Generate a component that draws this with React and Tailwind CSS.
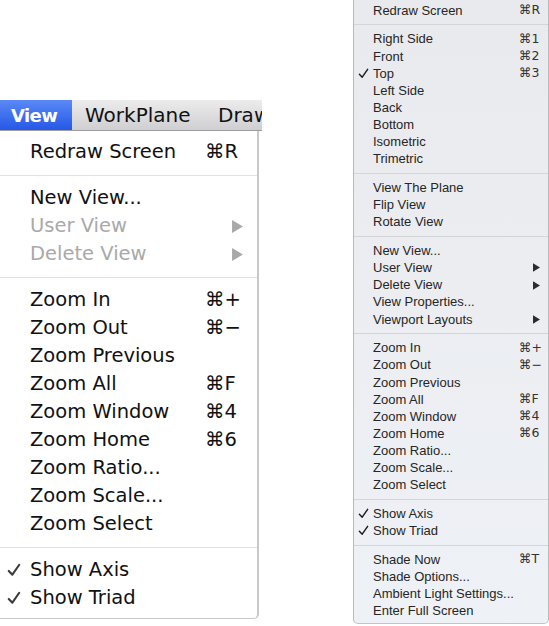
import React from "react";

const SEP = { sep: true };

const classicItems = [
  { label: "Redraw Screen", keys: "⌘R" },
  SEP,
  { label: "New View..." },
  { label: "User View", disabled: true, sub: true },
  { label: "Delete View", disabled: true, sub: true },
  SEP,
  { label: "Zoom In", keys: "⌘+" },
  { label: "Zoom Out", keys: "⌘−" },
  { label: "Zoom Previous" },
  { label: "Zoom All", keys: "⌘F" },
  { label: "Zoom Window", keys: "⌘4" },
  { label: "Zoom Home", keys: "⌘6" },
  { label: "Zoom Ratio..." },
  { label: "Zoom Scale..." },
  { label: "Zoom Select" },
  SEP,
  { label: "Show Axis", checked: true },
  { label: "Show Triad", checked: true },
];

const modernItems = [
  { label: "Redraw Screen", keys: "⌘R" },
  SEP,
  { label: "Right Side", keys: "⌘1" },
  { label: "Front", keys: "⌘2" },
  { label: "Top", keys: "⌘3", checked: true },
  { label: "Left Side" },
  { label: "Back" },
  { label: "Bottom" },
  { label: "Isometric" },
  { label: "Trimetric" },
  SEP,
  { label: "View The Plane" },
  { label: "Flip View" },
  { label: "Rotate View" },
  SEP,
  { label: "New View..." },
  { label: "User View", sub: true },
  { label: "Delete View", sub: true },
  { label: "View Properties..." },
  { label: "Viewport Layouts", sub: true },
  SEP,
  { label: "Zoom In", keys: "⌘+" },
  { label: "Zoom Out", keys: "⌘−" },
  { label: "Zoom Previous" },
  { label: "Zoom All", keys: "⌘F" },
  { label: "Zoom Window", keys: "⌘4" },
  { label: "Zoom Home", keys: "⌘6" },
  { label: "Zoom Ratio..." },
  { label: "Zoom Scale..." },
  { label: "Zoom Select" },
  SEP,
  { label: "Show Axis", checked: true },
  { label: "Show Triad", checked: true },
  SEP,
  { label: "Shade Now", keys: "⌘T" },
  { label: "Shade Options..." },
  { label: "Ambient Light Settings..." },
  { label: "Enter Full Screen" },
];

const Triangle = ({ className }) => (
  <svg viewBox="0 0 10 12" className={className}>
    <path d="M0 0 L10 6 L0 12 Z" fill="currentColor" />
  </svg>
);

const Check = ({ className, weight = 1.6 }) => (
  <svg viewBox="0 0 12 12" className={className}>
    <path d="M1.5 6.8 L4.6 10 L10.5 1.5" fill="none" stroke="currentColor" strokeWidth={weight} strokeLinecap="round" strokeLinejoin="round" />
  </svg>
);

const ClassicMenu = () => (
  <div className="w-[262px] mt-[100px] font-['DejaVu_Sans',sans-serif]">
    {/* menu bar */}
    <div className="flex h-[31px] items-center overflow-hidden bg-gradient-to-b from-[#ececec] to-[#cfcfd2] border-b border-[#9c9ca0] text-[20px] text-[#111]">
      <div className="h-full w-[72px] shrink-0 flex items-center pl-[11px] bg-gradient-to-b from-[#5a88f6] to-[#2657e6] text-white text-[18px] font-bold tracking-[-0.6px]">
        View
      </div>
      <div className="pl-[13px] w-[146px] shrink-0">WorkPlane</div>
      <div className="shrink-0">Draw</div>
    </div>
    <div className="w-[259px] bg-white border-r-2 border-b border-[#c9c9c9] rounded-br-[5px] pt-[7px] pb-[6px] text-[19.5px]">
      {classicItems.map((it, i) =>
        it.sep ? (
          <div key={i} className="h-[18px] flex items-center">
            <div className="h-px w-full bg-[#e2e2e2]" />
          </div>
        ) : (
          <div
            key={i}
            className={`h-[28px] flex items-center ${it.disabled ? "text-[#a9a9a9]" : "text-[#111]"}`}
          >
            <span className="w-[30px] flex justify-center pr-[2px]">
              {it.checked && <Check weight={1.8} className="w-[14px] h-[14px] text-[#3c3c3c]" />}
            </span>
            <span className="flex-1 whitespace-nowrap">{it.label}</span>
            <span className="w-[52px] flex items-center">
              {it.keys}
              {it.sub && <Triangle className="ml-[27px] w-[11px] h-[13px] text-[#a8a8a8]" />}
            </span>
          </div>
        )
      )}
    </div>
  </div>
);

const ModernMenu = () => (
  <div className="ml-[91px] w-[196px] bg-gradient-to-b from-[#e9eaed] to-[#eef1f6] border-x border-b border-x-[#b9b9bb] border-b-[#c3c3c6] rounded-b-[5px] pt-[2px] pb-[3px] text-[13px] text-[#262626] font-['Liberation_Sans',sans-serif]">
    {modernItems.map((it, i) =>
      it.sep ? (
        <div key={i} className="h-[11.5px] flex items-center">
          <div className="h-px w-full bg-[#d3d5d9]" />
        </div>
      ) : (
        <div key={i} className="h-[17.15px] flex items-center">
          <span className="w-[19px] pl-[4px] flex items-center">
            {it.checked && <Check className="w-[11px] h-[11px] text-[#1c1c1c]" />}
          </span>
          <span className="flex-1 whitespace-nowrap">{it.label}</span>
          <span className="w-[29px] flex items-center text-[12.5px] text-[#333] font-['DejaVu_Sans',sans-serif]">
            {it.keys}
            {it.sub && <Triangle className="ml-[14px] w-[7px] h-[9px] text-[#2c2c2c]" />}
          </span>
        </div>
      )
    )}
  </div>
);

export default function App() {
  return (
    <div className="w-[549px] h-[626px] bg-white flex items-start overflow-hidden">
      <ClassicMenu />
      <ModernMenu />
    </div>
  );
}
